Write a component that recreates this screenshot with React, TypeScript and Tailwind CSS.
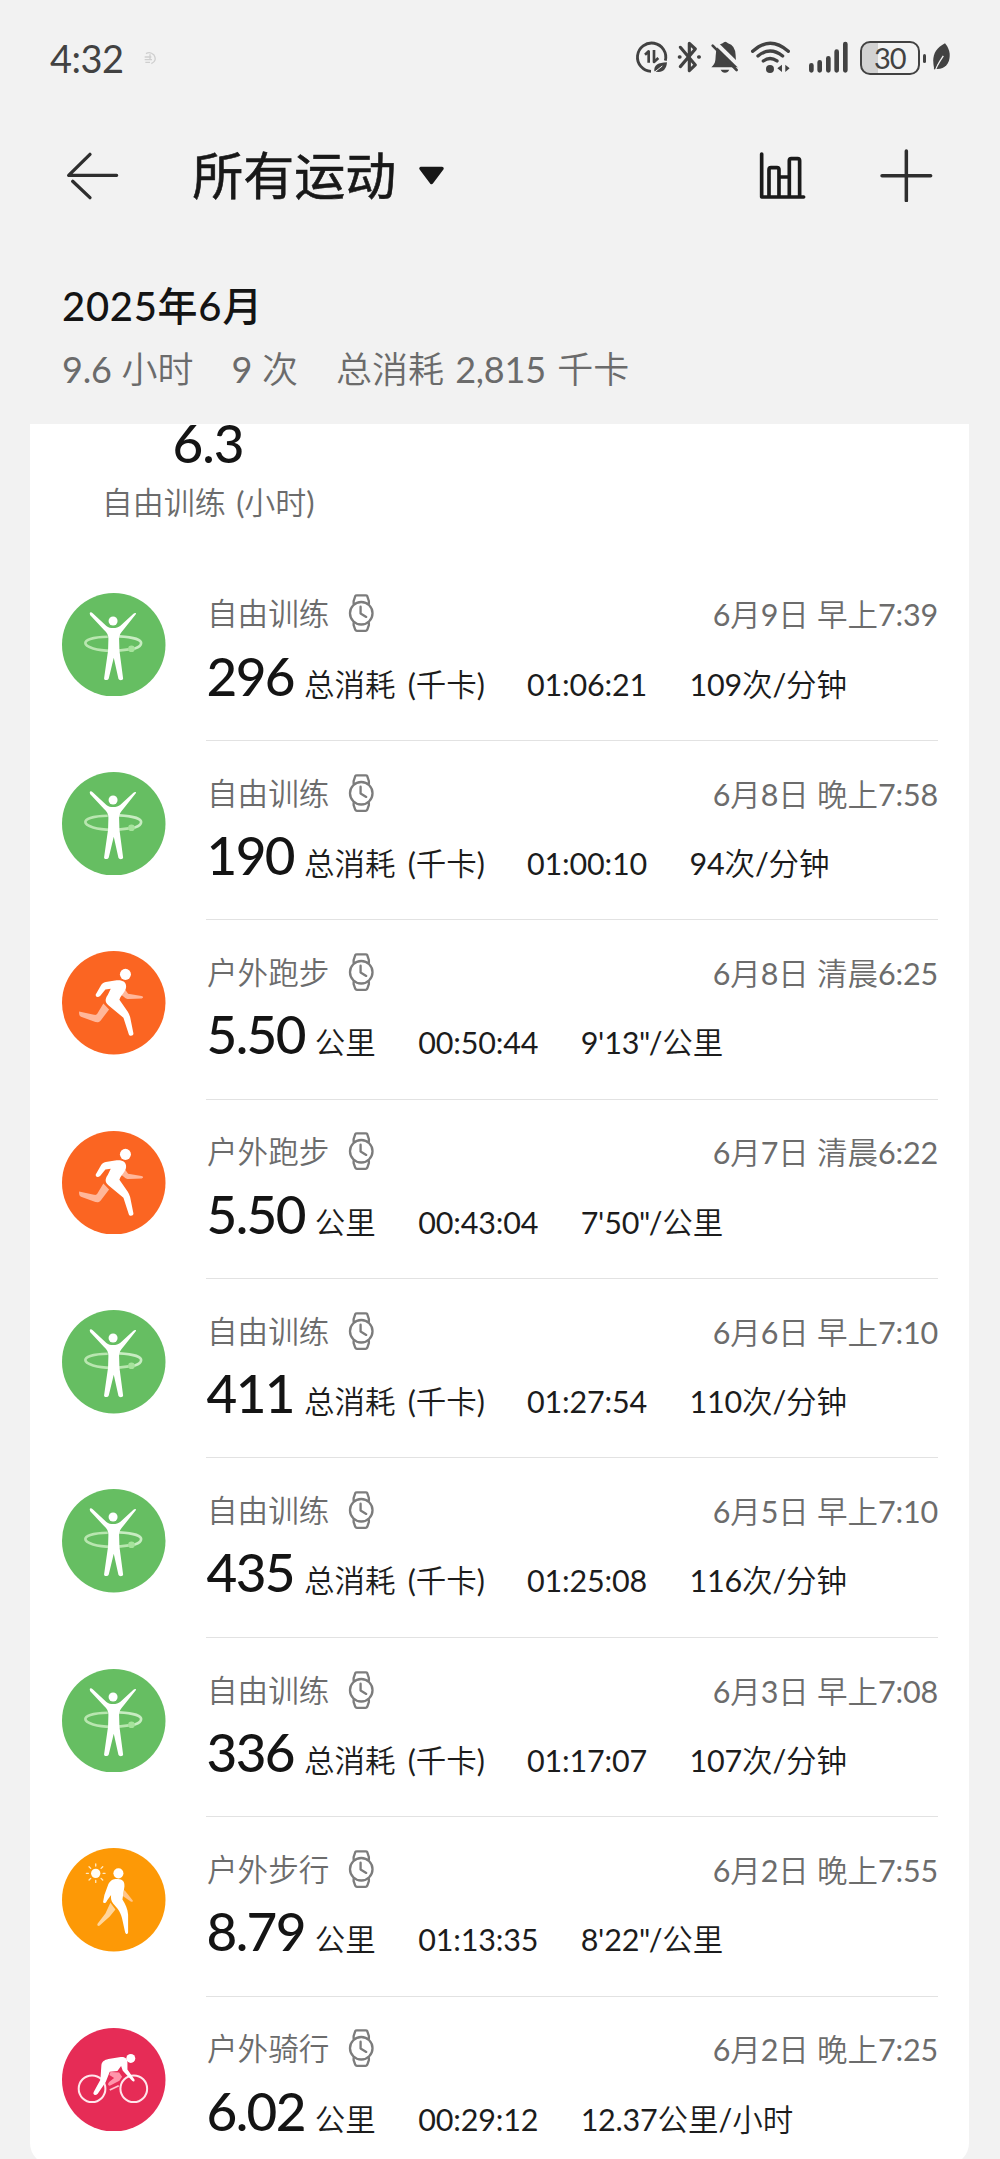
import React from "react";

type Kind = "free" | "run" | "walk" | "ride";

interface Workout {
  kind: Kind;
  name: string;
  date: string;
  value: string;
  unit: string;
  duration: string;
  rate: string;
}

const workouts: Workout[] = [
  { kind: "free", name: "自由训练", date: "6月9日 早上7:39", value: "296", unit: "总消耗 (千卡)", duration: "01:06:21", rate: "109次/分钟" },
  { kind: "free", name: "自由训练", date: "6月8日 晚上7:58", value: "190", unit: "总消耗 (千卡)", duration: "01:00:10", rate: "94次/分钟" },
  { kind: "run", name: "户外跑步", date: "6月8日 清晨6:25", value: "5.50", unit: "公里", duration: "00:50:44", rate: "9'13\"/公里" },
  { kind: "run", name: "户外跑步", date: "6月7日 清晨6:22", value: "5.50", unit: "公里", duration: "00:43:04", rate: "7'50\"/公里" },
  { kind: "free", name: "自由训练", date: "6月6日 早上7:10", value: "411", unit: "总消耗 (千卡)", duration: "01:27:54", rate: "110次/分钟" },
  { kind: "free", name: "自由训练", date: "6月5日 早上7:10", value: "435", unit: "总消耗 (千卡)", duration: "01:25:08", rate: "116次/分钟" },
  { kind: "free", name: "自由训练", date: "6月3日 早上7:08", value: "336", unit: "总消耗 (千卡)", duration: "01:17:07", rate: "107次/分钟" },
  { kind: "walk", name: "户外步行", date: "6月2日 晚上7:55", value: "8.79", unit: "公里", duration: "01:13:35", rate: "8'22\"/公里" },
  { kind: "ride", name: "户外骑行", date: "6月2日 晚上7:25", value: "6.02", unit: "公里", duration: "00:29:12", rate: "12.37公里/小时" },
];

/** Sets digits and Latin marks one weight heavier than the Chinese characters around them so both look even. */
function Mixed({ text }: { text: string }) {
  return (
    <>
      {text.split(/([0-9.,:()'"/]+)/).map((part, i) =>
        i % 2 === 1 ? (
          <span key={i} className="font-normal tracking-[-0.2px]">
            {part}
          </span>
        ) : (
          part
        ),
      )}
    </>
  );
}

function FreeIcon() {
  return (
    <svg viewBox="66 68 310 310" className="size-[103.5px] shrink-0">
      <circle cx="221" cy="223" r="155" fill="#66be62" />
      <path d="M203 199C160 200 136 208 136 218C136 231 172 240 214 241C238 241 254 239 266 237" fill="none" stroke="#b9e6b0" strokeWidth="8" />
      <path d="M238 198C278 200 303 208 303 218C303 226 295 231 284 234" fill="none" stroke="#c8ecc2" strokeWidth="8" strokeLinecap="round" />
      <circle cx="274" cy="235" r="10" fill="#a6e39c" />
      <circle cx="219" cy="152" r="13.5" fill="#fff" />
      <path d="M149 128C151 124 155 126 158 129L199 167C205 172 212 173 219 173C228 173 235 171 241 166L280 130C284 126 290 127 287 132L250 178C242 188 237 193 237 205L238 240L249 324C249 330 237 331 235 325L221 262L206 324C204 330 192 330 192 324L204 240L205 205C205 194 201 188 192 179L150 134Z" fill="#fff" />
    </svg>
  );
}

function RunIcon() {
  return (
    <svg viewBox="66 65 310 310" className="size-[103.5px] shrink-0">
      <circle cx="221" cy="220" r="155" fill="#fb6522" />
      <path d="M190 222L207 240L182 273C178 278 173 279 166 278L123 262C118 259 117 255 117 246L162 256C167 257 169 256 172 252Z" fill="#ffb79a" />
      <path d="M255 180L264 193L304 200C310 201 311 205 305 207L266 209C260 209 256 207 252 203L243 196Z" fill="#ffb79a" />
      <circle cx="256" cy="135" r="16.500" fill="#fff" />
      <path d="M167 195L182 169C186 162 190 160 197 158L225 153C247 150 259 157 258 173C257 188 243 195 238 211L263 247C267 253 268 257 270 263L280 312C280 320 268 321 266 314L250 265L204 227C194 218 195 208 203 197L212 178L196 180L180 200C172 205 166 202 167 195Z" fill="#fff" />
    </svg>
  );
}

function WalkIcon() {
  return (
    <svg viewBox="66 56 310 310" className="size-[103.5px] shrink-0">
      <circle cx="221" cy="211" r="155" fill="#fd9906" />
      <path d="M167 104V110M167 153V159M139 132H145M189 132H195M147 112L152 117M183 147L188 152M147 152L152 147M183 117L188 112" stroke="#ffe9c4" strokeWidth="4" strokeLinecap="round" />
      <circle cx="167" cy="132" r="14" fill="#fffdf5" />
      <path d="M211 220L226 240L209 261L178 289C173 291 170 286 173 282L196 252Z" fill="#ffd59a" />
      <path d="M253 182L278 213C279 217 276 218 273 217L248 200Z" fill="#ffc58a" />
      <circle cx="235" cy="132" r="15" fill="#fff" />
      <path d="M193 197L205 164C212 151 222 148 233 149C248 149 254 158 253 171L247 210C256 224 263 238 264 256L264 308C263 315 257 315 255 308L246 267C243 255 240 248 232 237L219 222C213 215 212 207 213 197L201 213C199 221 190 223 189 218Z" fill="#fff" />
    </svg>
  );
}

function RideIcon() {
  return (
    <svg viewBox="186 84 310 310" className="size-[103.5px] shrink-0">
      <circle cx="341" cy="239" r="155" fill="#e62c56" />
      <circle cx="276" cy="266" r="40" fill="none" stroke="#ffe6eb" strokeWidth="6" />
      <circle cx="401" cy="266" r="40" fill="none" stroke="#ffe6eb" strokeWidth="6" />
      <path d="M331 216L357 217L366 230L358 242L329 257C321 255 324 248 329 244L342 234L328 225Z" fill="#ff95ab" />
      <path d="M329 270L356 257" stroke="#ffc3cf" strokeWidth="5" />
      <circle cx="392" cy="175" r="13.500" fill="#fff" />
      <path d="M304 195C306 184 313 180 325 177L362 171C377 170 383 178 382 191L382 208L403 238C405 244 400 246 396 242L368 212L363 198L352 213L329 215L317 246L293 281C286 288 277 284 281 276L301 239Z" fill="#fff" />
    </svg>
  );
}

const icons: Record<Kind, () => React.JSX.Element> = { free: FreeIcon, run: RunIcon, walk: WalkIcon, ride: RideIcon };

function WatchIcon() {
  return (
    <svg viewBox="924 73 80 116" className="-mt-[2px] ml-[18.500px] h-[38.500px] w-[26.500px] shrink-0" fill="none" stroke="#7c7c7c" strokeWidth="7" strokeLinejoin="round" strokeLinecap="round">
      <circle cx="964" cy="131" r="34" />
      <path d="M941 102V94L946 79C947 77 949 77 951 77H977C979 77 981 77 982 79L987 94V102M941 160V167L946 181C947 183 949 184 951 184H977C979 184 981 183 982 181L987 167V160M962 111V132L979 142" />
    </svg>
  );
}

function StatusBar() {
  return (
    <div className="flex h-[116px] items-center pl-[50px] text-[#424242]">
      <span className="w-[75px] text-[38px] leading-none tracking-[-0.5px]">4:32</span>
      <svg viewBox="0 0 40 42" className="-mt-px ml-[18px] h-[14px] w-[14px]" fill="none" stroke="#cfcfcf" strokeWidth="4">
        <path d="M8 8Q20 0 32 12Q42 30 24 38M4 18H24M4 26H26M6 34H20M20 10V26" />
      </svg>
      <div className="ml-auto flex h-[36px] items-center pr-[49px]">
        <svg viewBox="106 60 102 106" className="h-[35.300px] w-[34px]" fill="none" stroke="#424242" strokeWidth="8.500">
          <path d="M197 122A42.500 42.500 0 1 0 154 154" />
          <path d="M136 104L147 94V128M163 90V126L176 114" strokeWidth="8" strokeLinejoin="round" />
          <path d="M164 154C162 135 175 128 202 127C201 148 187 162 164 154Z" fill="#424242" stroke="none" />
          <path d="M160 160L188 138" stroke="#f2f2f2" strokeWidth="3" />
        </svg>
        <svg viewBox="234 60 72 106" className="ml-[8.500px] h-[35.300px] w-[24px]" fill="none" stroke="#424242" strokeWidth="9.500" strokeLinejoin="round" strokeLinecap="round">
          <path d="M244 82L289 135L271 152V70L289 87L244 140" />
          <path d="M241 111H243M299 111H301" strokeWidth="10" />
        </svg>
        <svg viewBox="332 60 88 106" className="ml-[8.700px] h-[35.300px] w-[29.300px]">
          <path d="M336 142C348 131 348 125 349 108Q350 74 370 70Q378 61 386 70Q408 76 409 106C410 126 411 132 420 142Z" fill="#424242" />
          <path d="M364 149H390Q386 158 377 158Q368 158 364 149Z" fill="#424242" />
          <path d="M346 66L423 141" stroke="#f2f2f2" strokeWidth="12" />
          <path d="M340 77L412 150" stroke="#424242" strokeWidth="8" strokeLinecap="round" />
        </svg>
        <svg viewBox="452 60 124 106" className="ml-[10.700px] h-[35.300px] w-[41.300px]" fill="none" stroke="#424242" strokeWidth="10" strokeLinecap="round">
          <path d="M460 94Q512 46 567 94M476 108Q512 78 550 108M492 123Q512 108 533 123" />
          <circle cx="512" cy="147" r="12" fill="#424242" stroke="none" />
          <path d="M548 134V156L534 145ZM558 134V156L571 145Z" fill="#424242" stroke="none" />
        </svg>
        <svg viewBox="626 60 122 106" className="ml-[16.700px] h-[35.300px] w-[40.700px]" stroke="#424242" strokeWidth="14" strokeLinecap="round">
          <path d="M636 136V151M661 127V151M687 115V151M712 95V151M738 72V151" />
        </svg>
        <div className="ml-[11px] flex h-[33.500px] w-[60px] items-center justify-center rounded-[10px] border-[2.500px] border-[#424242] bg-[linear-gradient(90deg,#d2d2d2_28%,transparent_28%)] pb-[2px] text-[29px] leading-none tracking-[-1px]">
          30
        </div>
        <div className="ml-[3px] h-[9px] w-[3.500px] rounded-full bg-[#424242]" />
        <svg viewBox="996 60 56 106" className="ml-[6px] h-[35.300px] w-[18.700px]">
          <path d="M1035 70C1003 88 995 108 1002 144L1008 147C1035 149 1051 130 1049 101Q1047 84 1035 70Z" fill="#424242" />
          <path d="M1004 156C1010 137 1020 123 1030 108" fill="none" stroke="#f2f2f2" strokeWidth="4" />
          <path d="M1003 148L1012 124" fill="none" stroke="#424242" strokeWidth="4" />
        </svg>
      </div>
    </div>
  );
}

function Header() {
  return (
    <div className="flex h-[119px] items-center pr-[67px] pl-[66px]">
      <svg viewBox="198 452 160 148" className="h-[49.300px] w-[53.300px]" fill="none" stroke="#2e2e2e" strokeWidth="10" strokeLinecap="round" strokeLinejoin="round">
        <path d="M270 462L206 525H350M218 543L270 592" />
      </svg>
      <h1 className="ml-[73px] text-[51px] leading-none font-normal text-[#181818] [-webkit-text-stroke:0.6px_#181818]">所有运动</h1>
      <svg viewBox="0 0 27 20" className="mt-px ml-[22px] h-[20px] w-[27px]">
        <path d="M3 2.500H24L13.500 16.500Z" fill="#181818" stroke="#181818" strokeWidth="3.500" strokeLinejoin="round" />
      </svg>
      <svg viewBox="478 396 142 144" className="ml-auto h-[48px] w-[47.300px]" fill="none" stroke="#1a1a1a" strokeWidth="11" strokeLinecap="round" strokeLinejoin="round">
        <path d="M486 402V531H612M508 528V449Q508 443 514 443H532Q538 443 538 449V528M538 471H569M569 528V422Q569 416 575 416H594Q600 416 600 422V528" />
      </svg>
      <svg viewBox="840 386 158 160" className="ml-[74.500px] h-[53.300px] w-[52.700px]" fill="none" stroke="#2e2e2e" strokeWidth="10.500" strokeLinecap="round">
        <path d="M919 392V541M846 466H992" />
      </svg>
    </div>
  );
}

function WorkoutRow({ item, last }: { item: Workout; last: boolean }) {
  const Icon = icons[item.kind];
  return (
    <li className="flex h-[179.400px] pr-[31px] pl-[32px]">
      <div className="pt-[31px]">
        <Icon />
      </div>
      <div className={last ? "ml-[40px] flex-1" : "ml-[40px] flex-1 border-b-[1.500px] border-[#e2e2e2]"}>
        <div className="mt-[34px] flex h-[38px] items-center text-[#6c6c6c]">
          <span className="ml-[1.500px] text-[30.600px] leading-none font-[350]">{item.name}</span>
          <WatchIcon />
          <span className="ml-auto text-[30.500px] leading-none font-[350]">
            <Mixed text={item.date} />
          </span>
        </div>
        <div className="mt-[12px] flex h-[60px] items-baseline text-[30.500px] leading-[60px] font-[350] whitespace-nowrap text-[#1c1c1c]">
          <span className="ml-px text-[53px] font-medium tracking-[-1.600px] text-[#141414]">{item.value}</span>
          <span className="ml-[10px] [word-spacing:4px]">
            <Mixed text={item.unit} />
          </span>
          <span className="ml-[42.500px]">
            <Mixed text={item.duration} />
          </span>
          <span className="ml-[42.500px]">
            <Mixed text={item.rate} />
          </span>
        </div>
      </div>
    </li>
  );
}

export default function App() {
  return (
    <div className="h-[2159px] w-[1000px] overflow-hidden bg-[#f2f2f2] font-['Lato','Noto_Sans_CJK_SC',sans-serif]">
      <StatusBar />
      <Header />
      <div className="h-[189px] pt-[48px] pl-[62px]">
        <h2 className="text-[40px] leading-[46px] font-medium tracking-[0.700px] text-[#141414]">2025年6月</h2>
        <p className="mt-[17px] flex gap-[38px] text-[36px] leading-[46px] font-[350] text-[#6b6b6b]">
          <span>
            <Mixed text="9.6 小时" />
          </span>
          <span>
            <Mixed text="9 次" />
          </span>
          <span className="[word-spacing:1.500px]">
            <Mixed text="总消耗 2,815 千卡" />
          </span>
        </p>
      </div>
      <div className="mr-[31px] ml-[30px] h-[1741px] rounded-b-[22px] bg-white">
        <div className="flex h-[137.500px] w-[356px] flex-col items-center">
          <span className="-mt-[11px] text-[53px] leading-[60px] font-medium tracking-[-1px] text-[#141414]">6.3</span>
          <span className="mt-[9px] text-[31px] leading-[40px] font-[350] text-[#6c6c6c] [word-spacing:2px]">
            <Mixed text="自由训练 (小时)" />
          </span>
        </div>
        <ul>
          {workouts.map((item, i) => (
            <WorkoutRow key={i} item={item} last={i === workouts.length - 1} />
          ))}
        </ul>
      </div>
    </div>
  );
}
